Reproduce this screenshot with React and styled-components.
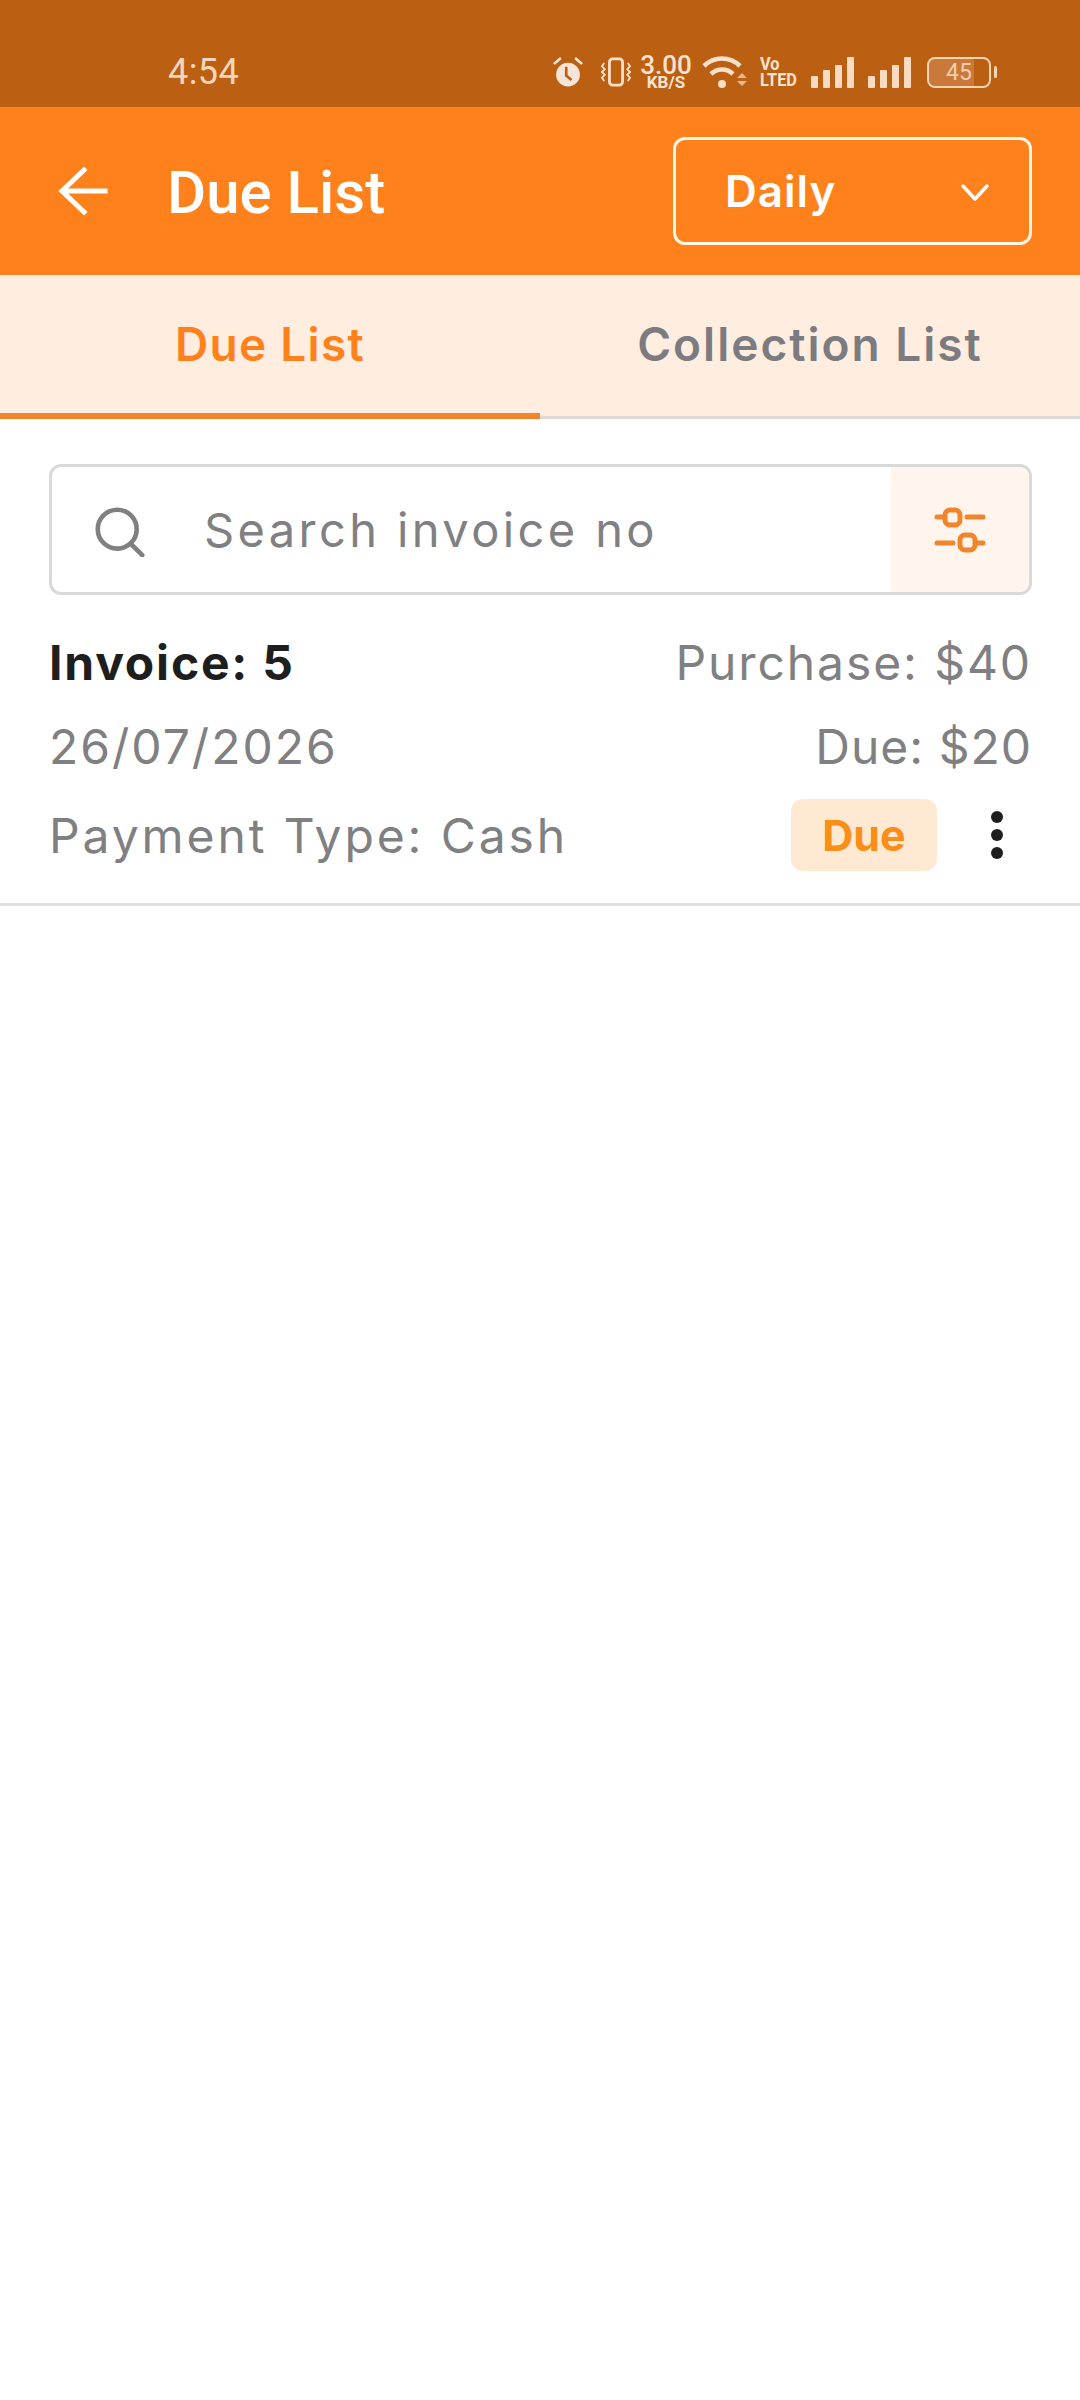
import React from "react";
import styled, { createGlobalStyle } from "styled-components";

const Global = createGlobalStyle`
  html, body { margin: 0; padding: 0; background: #fff; }
  * { box-sizing: border-box; }
`;

const Page = styled.div`
  width: 1080px;
  height: 2400px;
  background: #fff;
  overflow: hidden;
  font-family: Inter, "Liberation Sans", sans-serif;
`;

const StatusBar = styled.div`
  height: 107px;
  background: #bb5f12;
  color: #fbe3cf;
  display: flex;
  align-items: flex-end;
  padding: 0 89px 18px 168px;
  font-family: Roboto, sans-serif;
`;
const Clock = styled.span`
  font-size: 36px;
  line-height: 34px;
  letter-spacing: 0.4px;
  opacity: 0.9;
`;
const StatusIcons = styled.div`
  margin-left: auto;
  display: flex;
  align-items: center;
  height: 34px;
`;
const AlarmIcon = styled.svg`
  width: 32px;
  height: 30px;
  margin-right: 16px;
`;
const VibrateIcon = styled.svg`
  width: 32px;
  height: 30px;
  margin-right: 8px;
`;
const Speed = styled.div`
  width: 52px;
  margin-right: 10px;
  display: flex;
  flex-direction: column;
  align-items: center;
  font-weight: 500;
  font-size: 26px;
  line-height: 20px;
  & small { font-size: 17px; line-height: 14px; font-weight: 700; }
`;
const WifiIcon = styled.svg`
  width: 46px;
  height: 34px;
  margin-right: 12px;
`;
const Volte = styled.div`
  width: 37px;
  margin-right: 14px;
  display: flex;
  flex-direction: column;
  font-weight: 700;
  font-size: 19px;
  line-height: 16px;
  transform-origin: left center;
  transform: scaleX(0.86);
`;
const SignalIcon = styled.svg`
  width: 44px;
  height: 31px;
  margin-right: ${(p) => p.$gap}px;
`;
const Battery = styled.div`
  width: 64px;
  height: 31px;
  margin-left: 15px;
  border: 2.5px solid #f9d4b3;
  border-radius: 8px;
  display: flex;
  align-items: center;
  justify-content: center;
  font-size: 23px;
  position: relative;
  color: #f5cdaa;
  background: linear-gradient(90deg, #c97a3a 0 75%, transparent 75%);
  background-clip: padding-box;
  &::after {
    content: "";
    position: absolute;
    right: -8px;
    top: 7px;
    width: 3px;
    height: 12px;
    border-radius: 2px;
    background: #f9d4b3;
  }
`;

const Header = styled.header`
  height: 168px;
  background: #ff811c;
  display: flex;
  align-items: center;
  padding: 0 48px 0 58px;
  color: #fff;
`;
const BackIcon = styled.svg`
  width: 50px;
  height: 50px;
  margin-right: 59px;
`;
const Title = styled.h1`
  margin: 4px 0 0;
  font-family: Roboto, sans-serif;
  font-weight: 500;
  font-size: 60px;
  line-height: 1;
`;
const Dropdown = styled.div`
  margin-left: auto;
  width: 359px;
  height: 108px;
  border: 3px solid #fff6e6;
  border-radius: 12px;
  display: flex;
  align-items: center;
  justify-content: space-between;
  padding: 0 39px 0 49px;
  font-weight: 600;
  font-size: 44px;
  letter-spacing: 1px;
`;
const Chevron = styled.svg`
  width: 30px;
  height: 20px;
  margin-top: 3px;
`;

const Tabs = styled.nav`
  display: flex;
  height: 144px;
  background: #ffeee0;
  border-bottom: 3px solid #dfdad6;
`;
const Tab = styled.div`
  flex: 1;
  display: flex;
  align-items: center;
  justify-content: center;
  margin-bottom: ${(p) => (p.$active ? "-3px" : "0")};
  border-bottom: ${(p) => (p.$active ? "6px solid #f0852b" : "none")};
  color: ${(p) => (p.$active ? "#ff811c" : "#7c7c80")};
  font-weight: 600;
  font-size: 46px;
  letter-spacing: ${(p) => (p.$active ? "1.3px" : "2px")};
  padding-bottom: ${(p) => (p.$active ? "0" : "3px")};
`;

const Content = styled.main`
  padding: 45px 48px 21px 49px;
`;
const SearchBox = styled.div`
  height: 131px;
  border: 3px solid #d9d9d9;
  border-radius: 12px;
  display: flex;
  align-items: stretch;
  overflow: hidden;
`;
const SearchIcon = styled.svg`
  width: 50px;
  height: 50px;
  margin: 40px 0 0 43px;
`;
const Placeholder = styled.div`
  flex: 1;
  display: flex;
  align-items: center;
  padding-left: 59px;
  color: #808083;
  font-size: 47px;
  letter-spacing: 3.4px;
`;
const FilterButton = styled.div`
  width: 138px;
  background: #fff5ec;
  display: flex;
  align-items: center;
  justify-content: center;
`;

const Rows = styled.div`
  display: grid;
  grid-template-columns: 1fr auto;
  grid-template-rows: 84px 84px 94px;
  margin-top: 25px;
  align-items: center;
`;
const InvoiceNo = styled.div`
  color: #1e1e1e;
  font-weight: 700;
  font-size: 48px;
  letter-spacing: 1.8px;
`;
const Muted = styled.div`
  color: #808083;
  font-size: 48px;
  letter-spacing: ${(p) => p.$spacing}px;
  text-align: ${(p) => (p.$left ? "left" : "right")};
`;
const StatusCell = styled.div`
  display: flex;
  align-items: center;
  justify-content: flex-end;
  gap: 54px;
  padding-right: 29px;
`;
const Badge = styled.span`
  width: 146px;
  height: 72px;
  background: #ffe9d2;
  border-radius: 12px;
  color: #fb8e17;
  font-weight: 700;
  font-size: 43px;
  display: flex;
  align-items: center;
  justify-content: center;
`;
const Dots = styled.div`
  display: flex;
  flex-direction: column;
  gap: 6px;
  & i { display: block; width: 12px; height: 12px; border-radius: 50%; background: #1e1e1e; }
`;
const Divider = styled.hr`
  margin: 0;
  border: 0;
  height: 3px;
  background: #e0e0e0;
`;

const Alarm = () => (
  <AlarmIcon viewBox="0 0 36 34">
    <circle cx="18" cy="20" r="13.5" fill="#f7e6d8" />
    <path d="M3 7l6-5M33 7l-6-5" stroke="#f7e6d8" strokeWidth="3" strokeLinecap="round" />
    <path d="M16 11v10l6 5" stroke="#bb5f12" strokeWidth="3" fill="none" />
  </AlarmIcon>
);
const Vibrate = () => (
  <VibrateIcon viewBox="0 0 34 32" fill="none" stroke="#fbe0c8" strokeLinecap="round">
    <rect x="10" y="2" width="14" height="28" rx="3.500" strokeWidth="3" />
    <path d="M4 7l-2 3 3 3-3 3 3 3-3 3 2 3M30 7l2 3-3 3 3 3-3 3 3 3-2 3" strokeWidth="2" />
  </VibrateIcon>
);
const Wifi = () => (
  <WifiIcon viewBox="0 0 46 34" fill="none" stroke="#fbe0c8">
    <path d="M2 11C12 1 28 1 38 11" strokeWidth="4.600" />
    <path d="M9 19c6-6 16-6 22 0" strokeWidth="4.600" />
    <circle cx="20" cy="29" r="4" fill="#fbe0c8" stroke="none" />
    <path d="M35 23l5-5 5 5zM35 26l5 5 5-5z" fill="#e9b68d" stroke="none" />
  </WifiIcon>
);
const Signal = ({ gap }) => (
  <SignalIcon viewBox="0 0 44 31" fill="#fbdcc2" $gap={gap}>
    <rect x="0" y="19" width="7" height="12" rx="1" />
    <rect x="12" y="13" width="7" height="18" rx="1" />
    <rect x="24" y="8" width="7" height="23" rx="1" />
    <rect x="36" y="0" width="7" height="31" rx="1" />
  </SignalIcon>
);
const Sliders = () => (
  <svg width="52" height="46" viewBox="0 0 52 46" fill="none" stroke="#f0852b" strokeWidth="5" strokeLinecap="round">
    <path d="M3 10h6M33 10h16M3 36h16M43 36h6" />
    <rect x="11" y="3" width="15" height="15" rx="5" />
    <rect x="26" y="28" width="15" height="15" rx="5" />
  </svg>
);

export default function App() {
  return (
    <Page>
      <Global />
      <StatusBar>
        <Clock>4:54</Clock>
        <StatusIcons>
          <Alarm />
          <Vibrate />
          <Speed>
            <span>3.00</span>
            <small>KB/S</small>
          </Speed>
          <Wifi />
          <Volte>
            <span>Vo</span>
            <span>LTED</span>
          </Volte>
          <Signal gap={13} />
          <Signal gap={0} />
          <Battery>45</Battery>
        </StatusIcons>
      </StatusBar>
      <Header>
        <BackIcon viewBox="0 0 50 50" fill="none" stroke="#fff" strokeWidth="5" strokeLinecap="square">
          <path d="M47 25H5M26 4L4 25l22 21" />
        </BackIcon>
        <Title>Due List</Title>
        <Dropdown>
          <span>Daily</span>
          <Chevron viewBox="0 0 30 20" fill="none" stroke="#fff" strokeWidth="3.500" strokeLinecap="round" strokeLinejoin="round">
            <path d="M3 3l12 13L27 3" />
          </Chevron>
        </Dropdown>
      </Header>
      <Tabs>
        <Tab $active>Due List</Tab>
        <Tab>Collection List</Tab>
      </Tabs>
      <Content>
        <SearchBox>
          <SearchIcon viewBox="0 0 54 54" fill="none" stroke="#808083" strokeWidth="5" strokeLinecap="round">
            <circle cx="24" cy="24" r="21" />
            <path d="M39 40l12 12" />
          </SearchIcon>
          <Placeholder>Search invoice no</Placeholder>
          <FilterButton>
            <Sliders />
          </FilterButton>
        </SearchBox>
        <Rows>
          <InvoiceNo>Invoice: 5</InvoiceNo>
          <Muted $spacing={1.9}>Purchase: $40</Muted>
          <Muted $left $spacing={2}>26/07/2026</Muted>
          <Muted $spacing={1}>Due: $20</Muted>
          <Muted $left $spacing={2.9}>Payment Type: Cash</Muted>
          <StatusCell>
            <Badge>Due</Badge>
            <Dots>
              <i />
              <i />
              <i />
            </Dots>
          </StatusCell>
        </Rows>
      </Content>
      <Divider />
    </Page>
  );
}
